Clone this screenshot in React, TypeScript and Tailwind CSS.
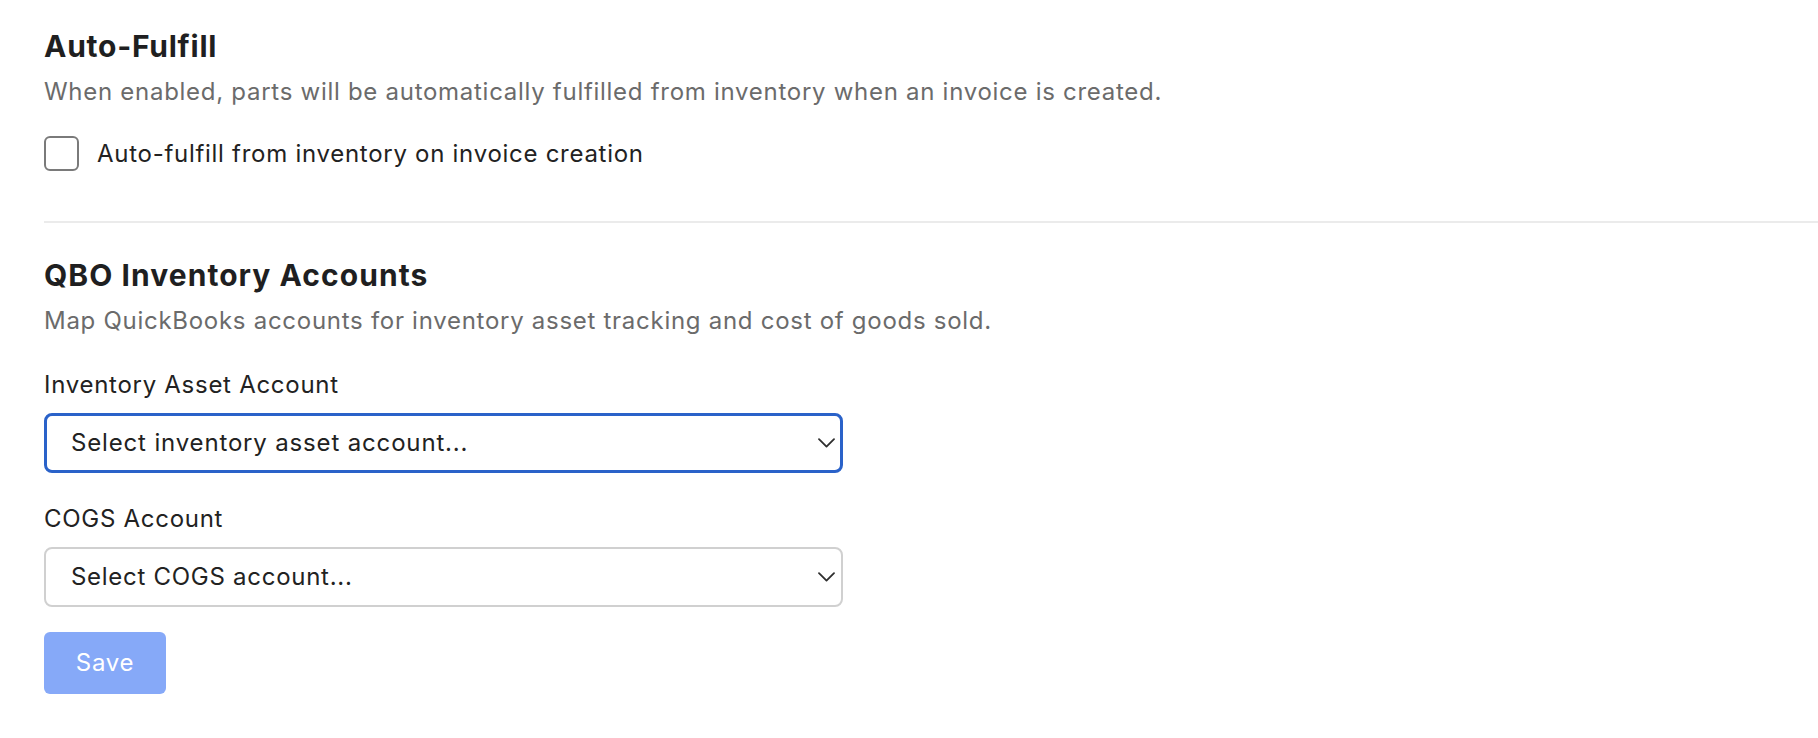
import { useState } from 'react';

interface AccountSelectProps {
  label: string;
  placeholder: string;
  focused?: boolean;
}

function Chevron() {
  return (
    <svg
      className="pointer-events-none absolute right-[8px] top-1/2 -translate-y-1/2"
      width="17"
      height="10"
      viewBox="0 0 17 10"
      fill="none"
    >
      <path d="M1 1.2L8.5 8.6L16 1.2" stroke="#2f2f2f" strokeWidth="1.8" strokeLinecap="round" strokeLinejoin="round" />
    </svg>
  );
}

function AccountSelect({ label, placeholder, focused }: AccountSelectProps) {
  const [value, setValue] = useState('');

  return (
    <div className="flex flex-col">
      <label className="text-[24px] leading-[32px] tracking-[0.03em] text-[#222222]">{label}</label>
      <div className="relative mt-[12px] w-[799px]">
        <select
          value={value}
          onChange={(e) => setValue(e.target.value)}
          className={
            focused
              ? 'h-[60px] w-full appearance-none rounded-[8px] border-[3px] border-[#2a62c9] bg-white pl-[24px] text-[24px] tracking-[0.035em] text-[#222222] outline-none'
              : 'h-[60px] w-full appearance-none rounded-[8px] border-2 border-[#d0d0d0] bg-white pl-[25px] text-[24px] tracking-[0.03em] text-[#222222] outline-none'
          }
        >
          <option value="">{placeholder}</option>
        </select>
        <Chevron />
      </div>
    </div>
  );
}

export default function App() {
  const [autoFulfill, setAutoFulfill] = useState(false);

  return (
    <div className="min-h-screen bg-white font-['Inter',sans-serif] text-[#222222]">
      <div className="pl-[44px] pt-[28px]">
        {/* Auto-fulfill toggle */}
        <section>
          <h2 className="text-[30px] font-bold leading-[36px] tracking-[0.025em] text-[#1f1f21]">Auto-Fulfill</h2>
          <p className="mt-[12px] text-[24px] leading-[32px] tracking-[0.03em] text-[#6b6b6b]">
            When enabled, parts will be automatically fulfilled from inventory when an invoice is created.
          </p>
          <label className="mt-[28px] flex cursor-pointer items-center gap-[18px]">
            <input
              type="checkbox"
              checked={autoFulfill}
              onChange={(e) => setAutoFulfill(e.target.checked)}
              className="h-[35px] w-[35px] appearance-none rounded-[6px] border-2 border-[#7a7a7a] bg-white"
            />
            <span className="text-[24px] leading-[32px] tracking-[0.03em] text-[#222222]">
              Auto-fulfill from inventory on invoice creation
            </span>
          </label>
        </section>

        <div className="mt-[50px] h-[2px] bg-[#ebebeb]" />

        {/* QuickBooks account mapping */}
        <section className="pt-[34px]">
          <h2 className="text-[30px] font-bold leading-[36px] tracking-[0.035em] text-[#1f1f21]">QBO Inventory Accounts</h2>
          <p className="mt-[12px] text-[24px] leading-[32px] tracking-[0.03em] text-[#6b6b6b]">
            Map QuickBooks accounts for inventory asset tracking and cost of goods sold.
          </p>
          <div className="mt-[32px] flex flex-col gap-[30px]">
            <AccountSelect label="Inventory Asset Account" placeholder="Select inventory asset account..." focused />
            <AccountSelect label="COGS Account" placeholder="Select COGS account..." />
          </div>
          <button
            disabled
            className="mt-[25px] h-[62px] w-[122px] rounded-[6px] bg-[#86a9f8] text-[24px] tracking-[0.03em] text-white"
          >
            Save
          </button>
        </section>
      </div>
    </div>
  );
}
